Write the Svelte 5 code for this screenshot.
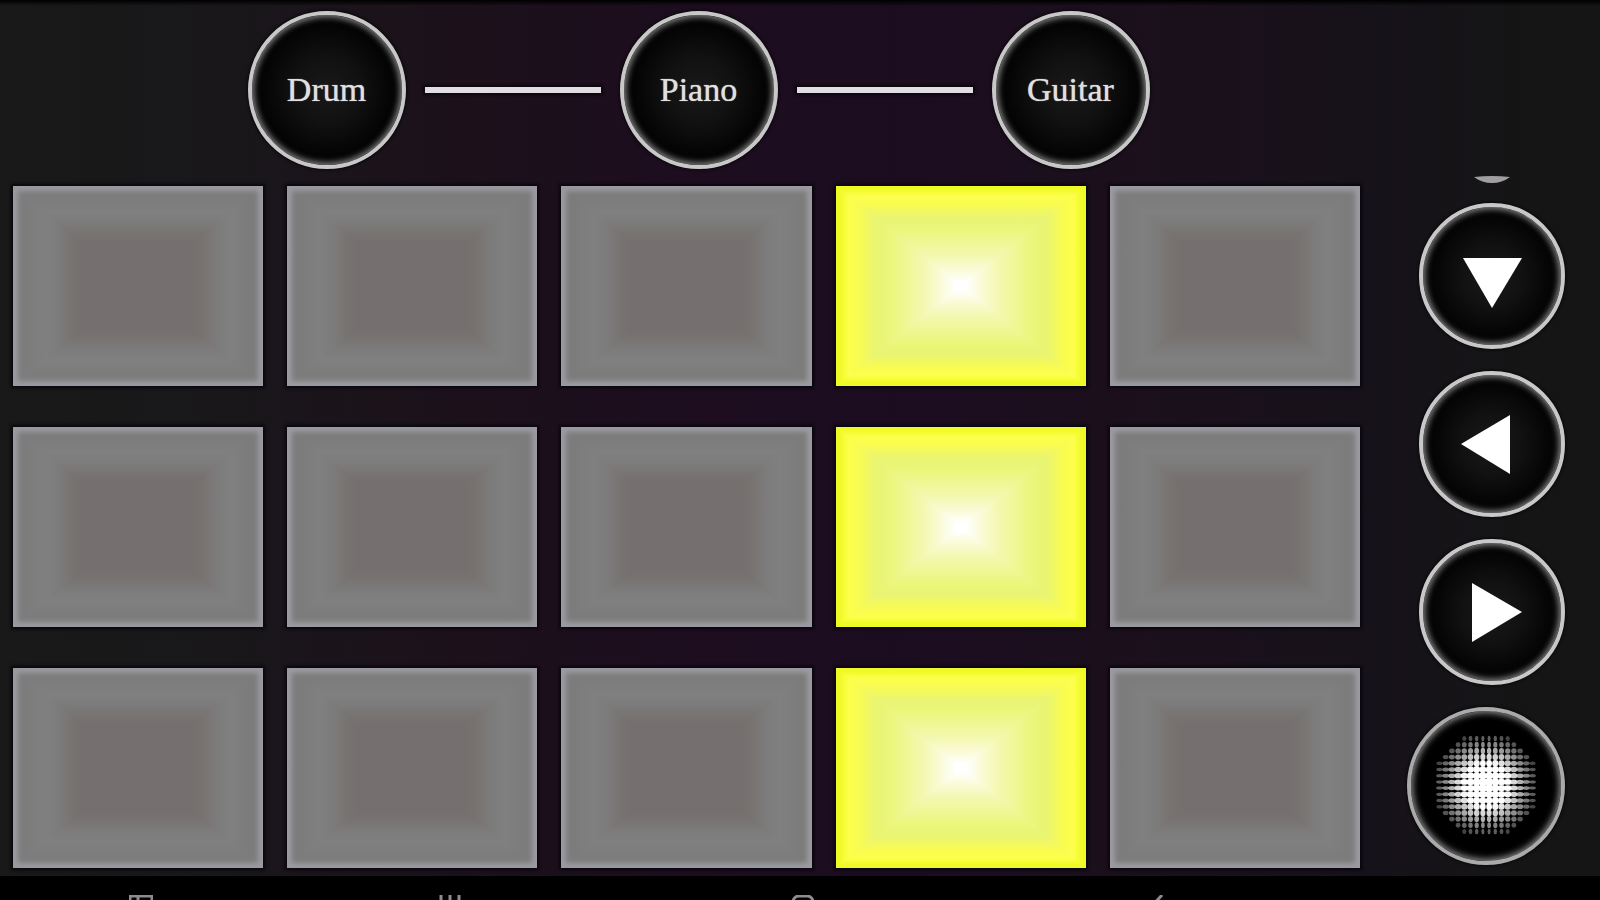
<script>
  const instruments = ['Drum', 'Piano', 'Guitar'];

  const arrows = [
    { label: 'Down', points: '44,55 103,55 73,105' },
    { label: 'Left', points: '42,73 91,44 91,103' },
    { label: 'Right', points: '53,44 103,73 53,103' },
  ];

  const litColumn = 3;
  let lit = $state(Array.from({ length: 15 }, (_, i) => i % 5 === litColumn));

  // halftone glow: dots shrink and fade away from the middle
  const dots = [];
  for (let row = 0; row < 16; row++) {
    for (let col = 0; col < 16; col++) {
      const dx = (col - 7.5) * 6.2;
      const dy = (row - 7.5) * 6.2;
      const dist = Math.hypot(dx, dy);
      if (dist > 52) continue;
      const size = 4 - dist * 0.056;
      dots.push({
        x: 79 + dx,
        y: 78 + dy,
        rx: size + Math.abs(dx) * 0.042,
        ry: size + Math.abs(dy) * 0.03,
        opacity: dist < 22 ? 1 : 1 - (dist - 22) / 40,
      });
    }
  }
</script>

<div class="app">
  <header class="instruments">
    {#each instruments as name, i}
      {#if i > 0}
        <span class="line"></span>
      {/if}
      <button class="knob large">{name}</button>
    {/each}
  </header>

  <main class="stage">
    <div class="pads">
      {#each lit as on, i}
        <button
          class="pad"
          class:on
          aria-label="Pad {i + 1}"
          aria-pressed={on}
          onclick={() => (lit[i] = !on)}
        ></button>
      {/each}
    </div>

    <div class="controls">
      <button class="peek" aria-label="Up">
        <svg viewBox="0 0 36 8"><path d="M0 2Q18 0 36 2Q28 8 18 8T0 2Z" fill="#a09ea1" /></svg>
      </button>
      {#each arrows as arrow}
        <button class="knob" aria-label={arrow.label}>
          <svg viewBox="0 0 146 146"><polygon points={arrow.points} fill="#fff" /></svg>
        </button>
      {/each}
      <button class="knob large glow" aria-label="Light">
        <svg viewBox="0 0 158 158">
          {#each dots as dot}
            <ellipse cx={dot.x} cy={dot.y} rx={dot.rx} ry={dot.ry} opacity={dot.opacity} fill="#fff" />
          {/each}
        </svg>
      </button>
    </div>
  </main>

  <nav class="system">
    <button aria-label="Screens">
      <svg viewBox="0 0 24 24"><path d="M1 1H23V23H1ZM9 1V23M1 10H23" /></svg>
    </button>
    <button aria-label="Recents">
      <svg viewBox="0 0 24 24"><path d="M3 0V24M12 0V24M21 0V24" /></svg>
    </button>
    <button aria-label="Home">
      <svg viewBox="0 0 24 24"><rect x="2" y="1" width="20" height="22" rx="6" /></svg>
    </button>
    <button aria-label="Back">
      <svg viewBox="0 0 24 24"><path d="M17 0L6 12L17 24" /></svg>
    </button>
  </nav>
</div>

<style>
  :global(body) {
    background: #000;
  }
  .app {
    height: 100vh;
    overflow: hidden;
    background:
      linear-gradient(#000 0, transparent 6px),
      linear-gradient(90deg, #181918 0%, #19171a 14%, #1c111b 28%, #1d0d1f 45%, #1c0c20 56%, #1b101c 72%, #17121a 85%, #151515 96%);
  }
  button {
    padding: 0;
    border: 0;
    background: none;
    color: inherit;
    cursor: pointer;
  }
  svg {
    display: block;
    width: 100%;
    height: 100%;
  }

  .instruments {
    display: flex;
    align-items: center;
    justify-content: center;
    gap: 19px;
    padding: 11px 203px 6px 0;
  }
  .line {
    width: 176px;
    height: 6px;
    background: #e2dde2;
    box-shadow: 0 0 3px 2px #0c060e;
  }

  .knob {
    flex: none;
    width: 146px;
    height: 146px;
    border: 4px solid #c9c8c9;
    border-radius: 50%;
    background: radial-gradient(circle, #191919 0%, #111 30%, #030303 60%, #000 72%);
    background-origin: border-box;
    box-shadow: inset 0 0 6px 2px #888, 0 0 3px 1px #0b080c;
    color: #e0e0e0;
    font-family: 'Liberation Serif', 'Times New Roman', serif;
    font-size: 34px;
    line-height: 40px;
    text-shadow: 0 0 1px #ccc;
  }
  .knob svg {
    margin: -4px;
    width: calc(100% + 8px);
    height: calc(100% + 8px);
  }
  .knob.large {
    width: 158px;
    height: 158px;
  }
  .knob.glow {
    border-color: #aaa;
    background: #000;
  }

  .stage {
    display: grid;
    grid-template-columns: 1fr 240px;
  }
  .pads {
    display: grid;
    grid-template-columns: repeat(5, 1fr);
    gap: 41px 24px;
    align-content: start;
    padding: 11px 0 8px 13px;
  }
  .pad {
    position: relative;
    aspect-ratio: 5 / 4;
    --shades: #7a7b7a 0%, #7b7c7b 6%, #808080 13%, #7d7c7c 18%, #777371 24%, #75706f 28%, #75706f 72%, #777371 76%, #7d7c7c 82%, #808080 87%, #7b7c7b 94%, #7a7b7a 100%;
    background: linear-gradient(90deg, var(--shades));
    box-shadow: 0 0 3px 2px #08060f;
  }
  .pad.on {
    --shades: #eff927 0%, #f1fb2b 2%, #fdff4b 5%, #f9fc50 9%, #e9f472 16%, #ebf67c 22%, #f3f8b0 35%, #fafbd8 42%, #fff 48%, #fff 52%, #fafbd8 58%, #f3f8b0 65%, #ebf67c 78%, #e9f472 84%, #f9fc50 91%, #fdff4b 95%, #f1fb2b 98%, #eff927 100%;
  }
  /* top and bottom wedges, so the shading runs in from all four sides */
  .pad::before {
    content: '';
    position: absolute;
    inset: 0;
    background: linear-gradient(var(--shades));
    clip-path: polygon(0 0, 100% 0, 0 100%, 100% 100%);
  }
  .pad::after {
    content: '';
    position: absolute;
    inset: 0;
    box-shadow: inset 0 0 5px 5px #9c9ba1;
  }
  .pad.on::after {
    box-shadow: inset 0 0 4px 3px #eff927;
  }

  .controls {
    display: flex;
    flex-direction: column;
    align-items: flex-end;
    gap: 22px;
    padding-right: 35px;
  }
  .peek {
    width: 146px;
    height: 6px;
  }
  .peek svg {
    width: 36px;
    height: 8px;
    margin: 0 auto;
  }

  .system {
    display: grid;
    grid-template-columns: 309px 353px 354px 1fr;
    height: 48px;
    padding: 19px 0 0 129px;
    box-sizing: border-box;
    background: #000;
  }
  .system button {
    width: 24px;
    height: 24px;
  }
  .system svg {
    fill: none;
    stroke: #8c8c8c;
    stroke-width: 3;
  }
</style>
